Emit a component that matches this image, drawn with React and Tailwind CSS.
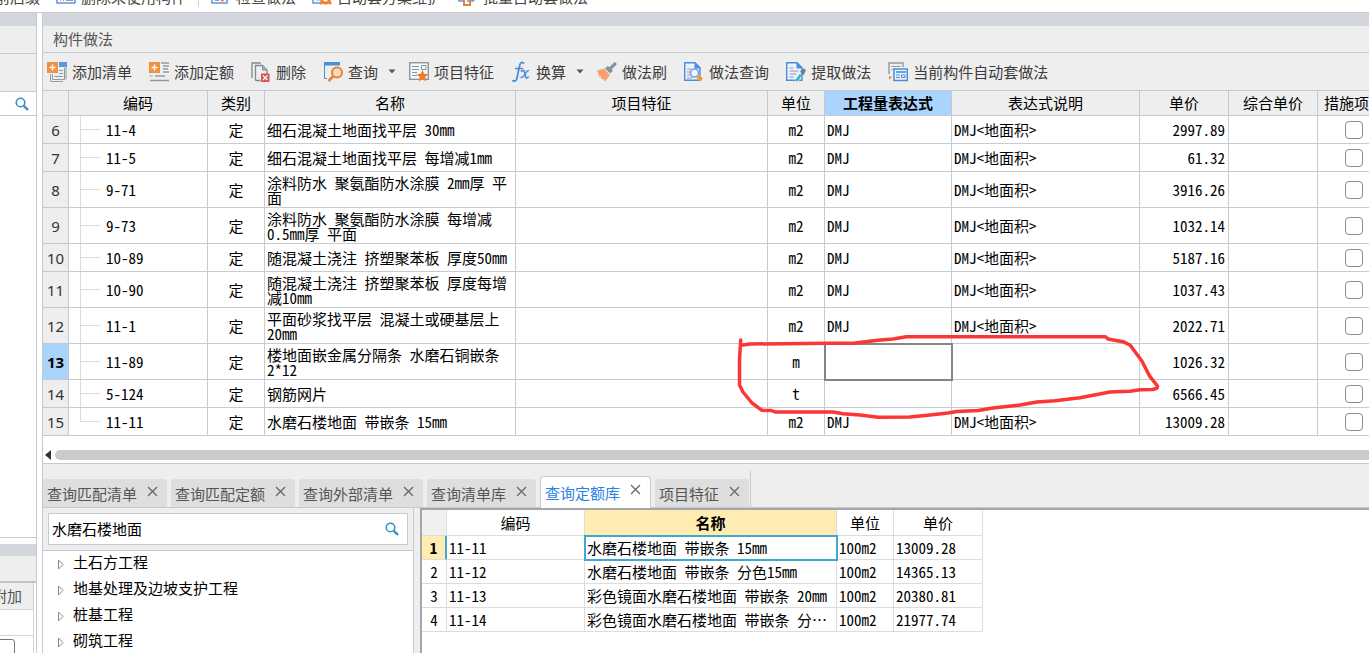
import React from 'react';

const COLUMNS = [
    { label: '', width: 'w-[26px]' },
    { label: '编码', width: 'w-[139px]' },
    { label: '类别', width: 'w-[57px]' },
    { label: '名称', width: 'w-[251px]' },
    { label: '项目特征', width: '' },
    { label: '单位', width: 'w-[57px]' },
    { label: '工程量表达式', width: 'w-[127px]', active: true },
    { label: '表达式说明', width: 'w-[188px]' },
    { label: '单价', width: 'w-[89px]' },
    { label: '综合单价', width: 'w-[89px]' },
    { label: '措施项目', width: 'w-[73px]' },
];

const ROWS = [
    { no: 6, code: '11-4', name: '细石混凝土地面找平层 30mm', unit: 'm2', expr: 'DMJ', price: '2997.89' },
    { no: 7, code: '11-5', name: '细石混凝土地面找平层 每增减1mm', unit: 'm2', expr: 'DMJ', price: '61.32' },
    { no: 8, code: '9-71', name: '涂料防水 聚氨酯防水涂膜 2mm厚 平\n面', unit: 'm2', expr: 'DMJ', price: '3916.26' },
    { no: 9, code: '9-73', name: '涂料防水 聚氨酯防水涂膜 每增减\n0.5mm厚 平面', unit: 'm2', expr: 'DMJ', price: '1032.14' },
    { no: 10, code: '10-89', name: '随混凝土浇注 挤塑聚苯板 厚度50mm', unit: 'm2', expr: 'DMJ', price: '5187.16' },
    { no: 11, code: '10-90', name: '随混凝土浇注 挤塑聚苯板 厚度每增\n减10mm', unit: 'm2', expr: 'DMJ', price: '1037.43' },
    { no: 12, code: '11-1', name: '平面砂浆找平层 混凝土或硬基层上\n20mm', unit: 'm2', expr: 'DMJ', price: '2022.71' },
    { no: 13, code: '11-89', name: '楼地面嵌金属分隔条 水磨石铜嵌条\n2*12', unit: 'm', expr: '', price: '1026.32', active: true },
    { no: 14, code: '5-124', name: '钢筋网片', unit: 't', expr: '', price: '6566.45' },
    { no: 15, code: '11-11', name: '水磨石楼地面 带嵌条 15mm', unit: 'm2', expr: 'DMJ', price: '13009.28' },
];

const TABS = [
    { label: '查询匹配清单' },
    { label: '查询匹配定额' },
    { label: '查询外部清单' },
    { label: '查询清单库' },
    { label: '查询定额库', active: true },
    { label: '项目特征' },
];

const TREE = ['土石方工程', '地基处理及边坡支护工程', '桩基工程', '砌筑工程'];

const QUOTAS = [
    { code: '11-11', name: '水磨石楼地面 带嵌条 15mm', unit: '100m2', price: '13009.28' },
    { code: '11-12', name: '水磨石楼地面 带嵌条 分色15mm', unit: '100m2', price: '14365.13' },
    { code: '11-13', name: '彩色镜面水磨石楼地面 带嵌条 20mm', unit: '100m2', price: '20380.81' },
    { code: '11-14', name: '彩色镜面水磨石楼地面 带嵌条 分⋯', unit: '100m2', price: '21977.74' },
];

/* ---------- icons ---------- */

const Icon = ({ children }) => (
    <svg width="20" height="20" viewBox="0 0 20 20" fill="none" className="shrink-0" aria-hidden="true">
        {children}
    </svg>
);

const PlusBadge = () => (
    <>
        <rect width="11" height="11" fill="#ee9440" />
        <path d="M5.5 2.5v6M2.5 5.5h6" stroke="#fff" strokeWidth="1.4" />
    </>
);

const AddListIcon = () => (
    <Icon>
        <path d="M12 0h8v5h-8z" fill="#5b97e0" />
        <path d="M19 5v12.500M3.500 12v7.500H16" stroke="#8f9ca5" />
        <path d="M17.500 6v11.500h-12V12" stroke="#8f9ca5" />
        <path d="M12 8.500h4M12 11.500h4M7.500 14.500H16" stroke="#8f9ca5" />
        <PlusBadge />
    </Icon>
);

const AddQuotaIcon = () => (
    <Icon>
        <path d="M12 1h8M14 4h6M14 7h5M14 10h6M6 14h10M1 18.500h19" stroke="#8f9ca5" strokeWidth="1.400" />
        <path d="M0 14h4" stroke="#b5bdc3" strokeWidth="1.400" />
        <PlusBadge />
    </Icon>
);

const DeleteIcon = () => (
    <Icon>
        <path d="M1 16V1h9M4.500 18.500V3.500h7l4.500 4.500v5M4.500 18.500h5" stroke="#7f8c95" strokeWidth="1.300" />
        <path d="M11.500 3.500V8H16" fill="#aab3b9" stroke="#7f8c95" />
        <rect x="10" y="11.500" width="8.500" height="8.500" fill="#d65454" />
        <path d="M12 13.500l4.500 4.500M16.500 13.500L12 18" stroke="#fff" strokeWidth="1.200" />
    </Icon>
);

const QueryIcon = () => (
    <Icon>
        <path d="M1 0h16v3.500H1z" fill="#4a8edb" />
        <path d="M1.500 3v13.500H4" stroke="#4a8edb" />
        <circle cx="14" cy="10.500" r="5" stroke="#f08030" strokeWidth="2" fill="#f7dcc8" />
        <path d="M10.500 14L5.500 19" stroke="#f08030" strokeWidth="2.600" />
    </Icon>
);

const FeatureIcon = () => (
    <Icon>
        <rect x=".7" y=".7" width="18.600" height="16.600" stroke="#8b979f" strokeWidth="1.400" fill="#f6f7f8" />
        <path d="M3 4.500h7M3 7.500h7M3 10.500h5M3 13.500h5" stroke="#8b979f" />
        <path d="M12.500 3.500H17v4h-4.500z" stroke="#8b979f" />
        <path d="M13.500 8l1.700 3.800 4.300.4-3.200 2.800 1 4.400-3.800-2.300-3.800 2.300 1-4.400-3.200-2.800 4.300-.4z" fill="#f07c28" />
    </Icon>
);

const FxIcon = () => (
    <svg width="20" height="22" viewBox="0 0 20 22" fill="none" stroke="#4a8edb" strokeLinecap="round" className="shrink-0" aria-hidden="true">
        <path d="M12.500 2C10.500.6 9 2 8.500 5L6 17c-.6 2.800-2 3.600-4 2.600" strokeWidth="1.800" />
        <path d="M4.500 7.500h7" strokeWidth="1.400" />
        <path d="M10.500 10c2-1.500 2.800-.5 3.300 2l.6 3c.4 2 1.300 2.600 2.800 1.200" strokeWidth="1.700" />
        <path d="M17.500 9.500c-2.500 0-4 7-7.500 7" strokeWidth="1.300" />
    </svg>
);

const BrushIcon = () => (
    <Icon>
        <path d="M0 8.500l7-2 6 6.500-5 6.500c-1-1-1.500-2-1.500-3l-1.500 1C3.500 16 3.500 15 4 14l-2 .5C1.500 12 1 10 0 8.500z" fill="#f9a072" />
        <path d="M8 6.500l2.500-2.500 2 1L17 .5c1.500-.8 3 .8 2.500 2.200L15 7l.7 2-2.500 2.500z" fill="#87939b" />
    </Icon>
);

const DocPage = () => (
    <>
        <path d="M.7 .7H11l5 5v12.600H.7z" fill="#eaf2fc" stroke="#4a8edb" strokeWidth="1.400" />
        <path d="M10.500 0L17 6.500h-6.500z" fill="#4a8edb" />
    </>
);

const DocSearchIcon = () => (
    <Icon>
        <DocPage />
        <path d="M3 7h4M3 10h3M3 13h3M3 16h5" stroke="#8f9ca5" />
        <circle cx="10.500" cy="11" r="4" stroke="#7a9fe0" strokeWidth="1.600" fill="#f2f7ff" />
        <path d="M15.500 13l3.500 3.500-3 3-3.500-3.500z" fill="#f39a1e" />
    </Icon>
);

const DocExtractIcon = () => (
    <Icon>
        <DocPage />
        <path d="M3.500 6h4M3.500 9h9M3.500 12h7M3.500 15h4" stroke="#8f9ca5" strokeWidth="1.200" />
        <path d="M15 20H9v-4" fill="#eee" />
        <path d="M10 19l5-6.500" stroke="#38b6c8" strokeWidth="2.600" />
        <path d="M14 9.500l3.500 4 1-2.500 1.500-3-2-1.500-2.500 1.500z" fill="#6f7b83" />
    </Icon>
);

const AutoIcon = () => (
    <Icon>
        <path d="M1 12V1h14v4" stroke="#8f9ca5" strokeWidth="1.400" />
        <path d="M3.500 4.500h9M3.500 7.500H5" stroke="#8f9ca5" />
        <path d="M1 14.500h3l-3 3.500z" fill="#f08030" />
        <rect x="6" y="7" width="13.300" height="11.500" fill="#eaf2fc" stroke="#4a8edb" strokeWidth="1.500" />
        <path d="M8 10h10" stroke="#4a8edb" strokeWidth="1.600" />
        <path d="M8 13h4M8 15.500h4M13.500 13H17v2.500h-3.500z" stroke="#4a8edb" />
    </Icon>
);

const Arrow = () => (
    <svg width="8" height="5" viewBox="0 0 8 5" className="ml-[5px] -mr-1 shrink-0" aria-hidden="true">
        <path d="M.5 .5h7L4 4.500z" fill="#555" />
    </svg>
);

const SearchIcon = () => (
    <svg width="14" height="14" viewBox="0 0 14 14" fill="none" stroke="#3a8fc8" className="shrink-0" aria-hidden="true">
        <circle cx="5.500" cy="5.500" r="4.300" strokeWidth="1.600" />
        <path d="M8.800 8.800L13 13" strokeWidth="2.400" />
    </svg>
);

const ACTIONS = [
    { label: '添加清单', icon: AddListIcon },
    { label: '添加定额', icon: AddQuotaIcon },
    { label: '删除', icon: DeleteIcon },
    { label: '查询', icon: QueryIcon, menu: true },
    { label: '项目特征', icon: FeatureIcon },
    { label: '换算', icon: FxIcon, menu: true },
    { label: '做法刷', icon: BrushIcon },
    { label: '做法查询', icon: DocSearchIcon },
    { label: '提取做法', icon: DocExtractIcon },
    { label: '当前构件自动套做法', icon: AutoIcon },
];

/* ---------- sections ---------- */

const Ribbon = () => (
    <div className="flex h-3 shrink-0 items-end overflow-hidden bg-white">
        <div className="flex h-7 shrink-0 items-center pb-[2px] text-[#444]">
            <button className="w-10 overflow-hidden text-right"><span className="float-right whitespace-nowrap">前后缀</span></button>
            <button className="ml-4 flex items-center gap-[5px] whitespace-nowrap">
                <Icon>
                    <path d="M1 3h18v13H1z" stroke="#5b97e0" strokeWidth="1.500" />
                    <path d="M4 10l4 4M8 10l-4 4" stroke="#f08030" />
                    <path d="M10 9.500h7M10 13.500h7" stroke="#8f9ca5" />
                </Icon>
                删除未使用构件
            </button>
            <span className="ml-3 h-5 w-px bg-[#d0d2d6]"></span>
            <button className="ml-3 flex items-center gap-[5px] whitespace-nowrap">
                <Icon>
                    <path d="M1 3h15v13H1z" stroke="#5b97e0" strokeWidth="1.500" />
                    <path d="M4 11h5M4 13.500h4" stroke="#8f9ca5" />
                    <path d="M9 11.500l2.500 2 4-5" stroke="#f08030" strokeWidth="2" />
                </Icon>
                检查做法
            </button>
            <button className="ml-4 flex items-center gap-[5px] whitespace-nowrap">
                <Icon>
                    <path d="M8 16H1V3h12" stroke="#5b97e0" strokeWidth="1.500" />
                    <path d="M4 13h4" stroke="#8f9ca5" />
                    <circle cx="13.500" cy="12" r="4" stroke="#f08030" strokeWidth="3" />
                    <path d="M8 17l2-2M19 17l-2-2" stroke="#f08030" strokeWidth="2.500" />
                </Icon>
                自动套方案维护
            </button>
            <button className="ml-4 flex items-center gap-[5px] whitespace-nowrap">
                <Icon>
                    <path d="M1 3v11h4M9 14h6l4-4V3" stroke="#5b97e0" strokeWidth="1.500" />
                    <path d="M6 7v11h6v-6" stroke="#f08030" strokeWidth="2" />
                </Icon>
                批量自动套做法
            </button>
        </div>
    </div>
);

const SideDock = () => (
    <aside className="flex w-[37px] shrink-0 flex-col overflow-hidden border-r border-[#c5c9d0] bg-white">
        <div className="h-[13px] shrink-0 bg-[#d4d6dd]"></div>
        <div className="h-7 shrink-0 border-b border-[#c5c9d0] bg-[#eee]"></div>
        <div className="h-[37px] shrink-0 bg-[#eee]"></div>
        <div className="flex h-[25px] shrink-0 items-center justify-end border-y border-[#c5c9d0] pr-[7px]">
            <button aria-label="搜索构件"><SearchIcon /></button>
        </div>
        <div className="h-[422px] shrink-0 border-b border-[#c5c9d0]"></div>
        <div className="mt-[6px] h-3 shrink-0 bg-[#d4d6dd]"></div>
        <div className="h-[27px] shrink-0 border-b-2 border-[#bfc3c9] bg-[#eee]"></div>
        <div className="mr-[2px] flex h-[27px] shrink-0 items-center justify-end border-r border-b border-[#d0d3d8] bg-[#eee] pr-[11px] whitespace-nowrap text-[#555]">附加</div>
        <div className="mr-[2px] h-[26px] shrink-0 border-r border-b border-[#d0d3d8]"></div>
        <div className="mr-[2px] grow border-r border-[#d0d3d8] pt-[3px]">
            <input type="checkbox" aria-label="附加" className="-ml-[3px] block h-[18px] w-[18px] appearance-none rounded-[3px] border border-[#777] bg-white" />
        </div>
    </aside>
);

const Toolbar = () => (
    <div className="flex h-[38px] shrink-0 items-center gap-[17px] overflow-hidden border-b border-[#c5c9d0] bg-[#eee] pl-1 text-[#3c3c3c]">
        {ACTIONS.map(({ label, icon: ActionIcon, menu }) => (
            <button key={label} className="flex shrink-0 items-center gap-[5px] whitespace-nowrap">
                <ActionIcon />
                {label}
                {menu && <Arrow />}
            </button>
        ))}
    </div>
);

const TreeBranch = ({ last }) => (
    <span className="flex w-[31px] shrink-0 self-stretch pl-[11px]">
        <span className={last ? 'h-1/2 w-px bg-[#dcdcdc]' : 'h-full w-px bg-[#dcdcdc]'}></span>
        <span className="h-px grow self-center bg-[#dcdcdc]"></span>
    </span>
);

const cell = 'border-r border-b border-[#c8cbd0] p-0';

const WorkGrid = () => (
    <div className="relative shrink-0 overflow-hidden bg-white">
        <table className="w-full min-w-[1348px] table-fixed border-separate border-spacing-0 text-black">
            <thead>
                <tr className="h-[25px]">
                    {COLUMNS.map((col) => (
                        <th
                            key={col.label}
                            scope="col"
                            className={`${col.width} border-r border-b border-[#c3c8d3] p-0 leading-[20px] ${col.active ? 'bg-[#abd4fd] font-bold' : 'bg-[#eee] font-normal'}`}
                        >
                            {col.label}
                        </th>
                    ))}
                </tr>
            </thead>
            <tbody className="leading-[15px] [font-feature-settings:'hwid']">
                {ROWS.map((row, i) => (
                    <tr key={row.no} className={row.name.includes('\n') ? 'h-9' : 'h-7'}>
                        <th
                            scope="row"
                            className={`border-r border-b border-[#c3c8d3] p-0 pt-[2px] font-['Noto_Sans',sans-serif] [font-feature-settings:normal] ${row.active ? 'bg-[#abd4fd] font-bold' : 'bg-[#eee] font-normal text-[#333]'}`}
                        >
                            {row.no}
                        </th>
                        <td className={`${cell} h-px`}>
                            <div className="flex h-full items-center">
                                <TreeBranch last={i === ROWS.length - 1} />
                                <span className="pl-[6px]">{row.code}</span>
                            </div>
                        </td>
                        <td className={`${cell} text-center`}>定</td>
                        <td className={`${cell} pl-[2px] whitespace-pre`}>{row.name}</td>
                        <td className={cell}></td>
                        <td className={`${cell} text-center`}>{row.unit}</td>
                        <td className={`${cell} pl-[2px] ${row.active ? 'outline-2 -outline-offset-1 outline-[#858585]' : ''}`}>{row.expr}</td>
                        <td className={`${cell} pl-[2px]`}>{row.expr && `${row.expr}<地面积>`}</td>
                        <td className={`${cell} pr-[3px] text-right`}>{row.price}</td>
                        <td className={cell}></td>
                        <td className={cell}>
                            <input
                                type="checkbox"
                                aria-label={`措施项目 ${row.no}`}
                                className="mx-auto block h-[18px] w-[18px] appearance-none rounded-[4px] border border-[#8c8c8c] bg-white"
                            />
                        </td>
                    </tr>
                ))}
            </tbody>
        </table>

        {/* hand drawn marker round the rows without an expression */}
        <svg
            width="432"
            height="96"
            viewBox="0 0 432 96"
            fill="none"
            className="pointer-events-none absolute top-[240px] left-[690px]"
            aria-hidden="true"
        >
            <path
                d="M7.700 9L6.500 29V54L10 61 19 72 29 79.300 38.500 79.500 42 81H100L110 82.700 127 84 145 86.300 177 86 197 84 215 82 224 80.500 245 79.500 260 77 287 74 304 71 322 69.700 347 66.700 377 61 397 60.300 407 58.700 420 58.500 424 57 424.500 55 417 45.700 408.700 29.700 397 14 390 10.700 375 8 372.500 5.700H173.500L160 8 145 9.300 122 12 93.500 12.300 17 13 10 14"
                stroke="#fb3634"
                strokeWidth="3.500"
                strokeLinecap="round"
                strokeLinejoin="round"
            />
        </svg>
    </div>
);

const ScrollBar = () => (
    <div className="flex h-7 shrink-0 items-center gap-1 border-b border-[#c5c9d0] bg-white pt-[14px] pb-[3px] pl-[2px]">
        <svg width="6" height="10" viewBox="0 0 6 10" className="shrink-0" aria-hidden="true">
            <path d="M6 0v10L0 5z" fill="#333" />
        </svg>
        <div className="h-[10px] grow rounded-l-full bg-[#cbcbcb]"></div>
    </div>
);

const TabStrip = () => (
    <div className="flex h-[44px] shrink-0 items-end gap-1 border-b border-[#c5c9d0] bg-[#eee]" role="tablist">
        {TABS.map(({ label, active }) => (
            <div
                key={label}
                className={
                    active
                        ? '-mb-px flex h-8 items-center rounded-t border border-b-0 border-[#c5c9d0] bg-white pr-[9px] pl-1 text-[#2a82e4]'
                        : 'flex h-7 items-center rounded-t bg-[#dedede] pt-[2px] pr-[9px] pl-1 text-[#555]'
                }
            >
                <button role="tab" aria-selected={!!active} className="whitespace-nowrap">{label}</button>
                <button aria-label={`关闭${label}`} className="ml-[10px] pb-[6px]">
                    <svg width="11" height="11" viewBox="0 0 11 11" stroke="#666" strokeWidth="1.300" aria-hidden="true">
                        <path d="M1 1l9 9M10 1l-9 9" />
                    </svg>
                </button>
            </div>
        ))}
        <span className="-ml-[3px] h-9 w-px bg-[#c5c9d0]"></span>
    </div>
);

const CategoryPanel = () => (
    <div className="w-[371px] shrink-0 border-r border-[#c5c9d0] bg-white">
        <div className="border-b border-[#c5c9d0] bg-[#eee] px-[5px] py-[5px]">
            <label className="flex h-8 items-center border border-[#c5c9d0] bg-white pr-2 pl-[3px]">
                <input type="text" aria-label="查询定额" defaultValue="水磨石楼地面" className="min-w-0 grow bg-transparent text-black outline-none" />
                <SearchIcon />
            </label>
        </div>
        <ul className="text-black">
            {TREE.map((name) => (
                <li key={name} className="flex h-[26px] items-center gap-2 pb-1 pl-[14px]">
                    <svg width="8" height="11" viewBox="0 0 8 11" fill="none" stroke="#8a8a8a" className="mt-1 shrink-0" aria-hidden="true">
                        <path d="M1.500 1v9L6 5.500z" />
                    </svg>
                    {name}
                </li>
            ))}
        </ul>
    </div>
);

const quotaCell = 'border-r border-b border-[#dcdcdc] p-0 pl-[2px]';

const QuotaGrid = () => (
    <div className="min-w-0 grow overflow-hidden border-t-2 border-l-2 border-[#a3a7ac] bg-white">
        <table className="w-[561px] table-fixed border-separate border-spacing-0 leading-[20px] text-black [font-feature-settings:'hwid']">
            <thead>
                <tr className="h-[26px]">
                    <th className="w-[25px] border-r border-b border-[#dcdcdc] bg-[#f0f0f0] p-0" aria-label="序号"></th>
                    <th scope="col" className="w-[138px] border-r border-b border-[#dcdcdc] p-0 font-normal">编码</th>
                    <th scope="col" className="w-[252px] border-r border-b border-[#dcdcdc] bg-[#ffecb3] p-0 font-bold">名称</th>
                    <th scope="col" className="w-[57px] border-r border-b border-[#dcdcdc] p-0 font-normal">单位</th>
                    <th scope="col" className="border-r border-b border-[#dcdcdc] p-0 font-normal">单价</th>
                </tr>
            </thead>
            <tbody>
                {QUOTAS.map((quota, i) => (
                    <tr key={quota.code} className="h-6">
                        <th
                            scope="row"
                            className={
                                i === 0
                                    ? 'border-r-2 border-b border-r-[#3fa9d3] border-b-[#dcdcdc] bg-[#ffecb3] p-0 font-bold'
                                    : 'border-r border-b border-[#dcdcdc] p-0 font-normal'
                            }
                        >
                            {i + 1}
                        </th>
                        <td className={quotaCell}>{quota.code}</td>
                        <td className={`${quotaCell} whitespace-nowrap ${i === 0 ? 'outline-2 -outline-offset-1 outline-[#3fa9d3]' : ''}`}>{quota.name}</td>
                        <td className={quotaCell}>{quota.unit}</td>
                        <td className={quotaCell}>{quota.price}</td>
                    </tr>
                ))}
            </tbody>
        </table>
    </div>
);

const App = () => {
    return (
        <div className="flex h-screen flex-col overflow-hidden bg-white font-['Noto_Sans_CJK_SC',sans-serif] text-[15px] leading-[22px]">
            <Ribbon />
            <div className="flex min-h-0 grow border-t border-[#c9ccd2]">
                <SideDock />
                <main className="ml-[5px] flex min-w-0 grow flex-col border-l border-[#c5c9d0] bg-[#eee]">
                    <div className="h-[13px] shrink-0 bg-[#d4d6dd]"></div>
                    <h2 className="h-[27px] shrink-0 border-b border-[#c5c9d0] pl-[10px] leading-[26px] text-[#555]">构件做法</h2>
                    <Toolbar />
                    <WorkGrid />
                    <ScrollBar />
                    <TabStrip />
                    <div className="flex min-h-0 grow">
                        <CategoryPanel />
                        <div className="w-[6px] shrink-0 bg-[#eee]"></div>
                        <QuotaGrid />
                    </div>
                </main>
            </div>
        </div>
    );
};

export default App;
